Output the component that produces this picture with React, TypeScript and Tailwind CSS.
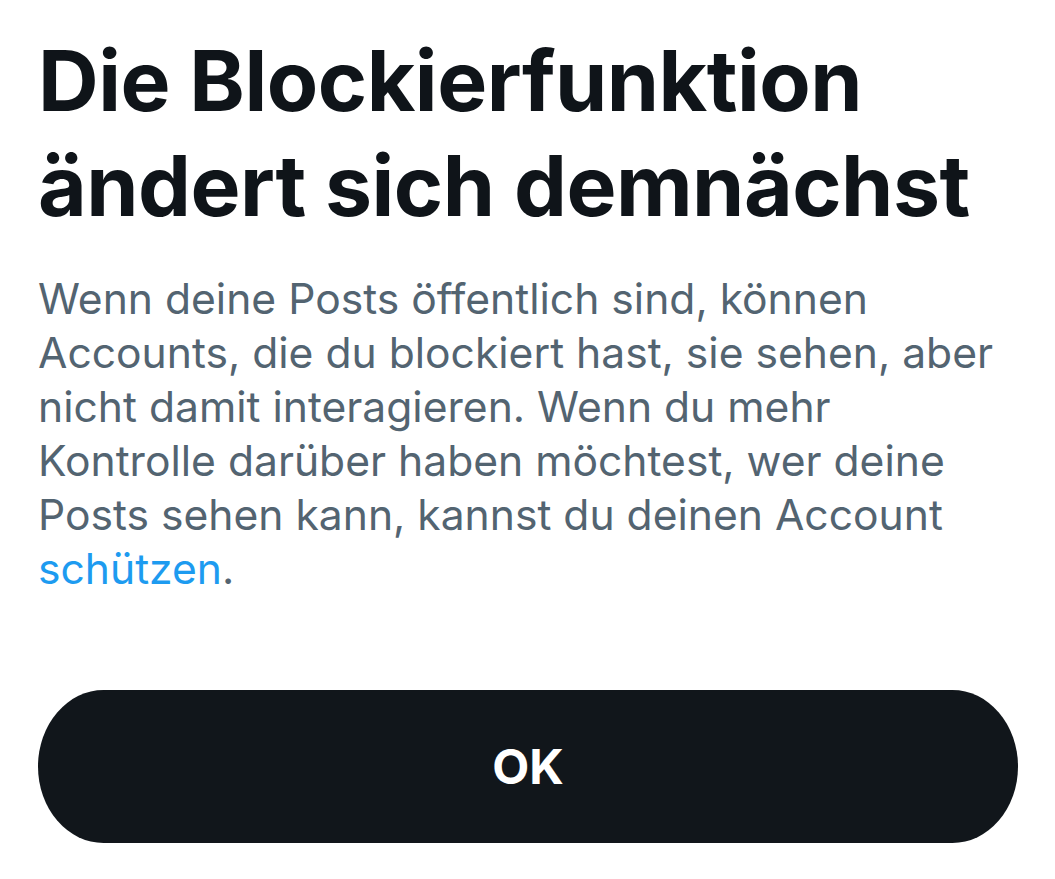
export default function App() {
  return (
    <div className="w-[1055px] h-[879px] bg-white overflow-hidden" style={{ fontFamily: "Inter, 'Noto Sans', sans-serif" }}>
      <div className="px-[38px] pt-[28px]">
        <h1 className="text-[84px] leading-[105px] font-bold text-[#0f1419] tracking-[-0.5px]">
          Die Blockierfunktion ändert sich demnächst
        </h1>
        <p className="mt-[34px] w-[972px] text-[42.6px] leading-[54px] text-[#536471]">
          Wenn deine Posts öffentlich sind, können Accounts, die du blockiert hast, sie sehen, aber nicht damit interagieren. Wenn du mehr Kontrolle darüber haben möchtest, wer deine Posts sehen kann, kannst du deinen Account <span className="text-[#1d9bf0]">schützen</span>.
        </p>
      </div>
      <div className="px-[38px] mt-[94px]">
        <button className="w-[980px] h-[153px] bg-[#11161b] rounded-[66px/77px] flex items-center justify-center text-white text-[48px] font-bold">
          OK
        </button>
      </div>
    </div>
  );
}
